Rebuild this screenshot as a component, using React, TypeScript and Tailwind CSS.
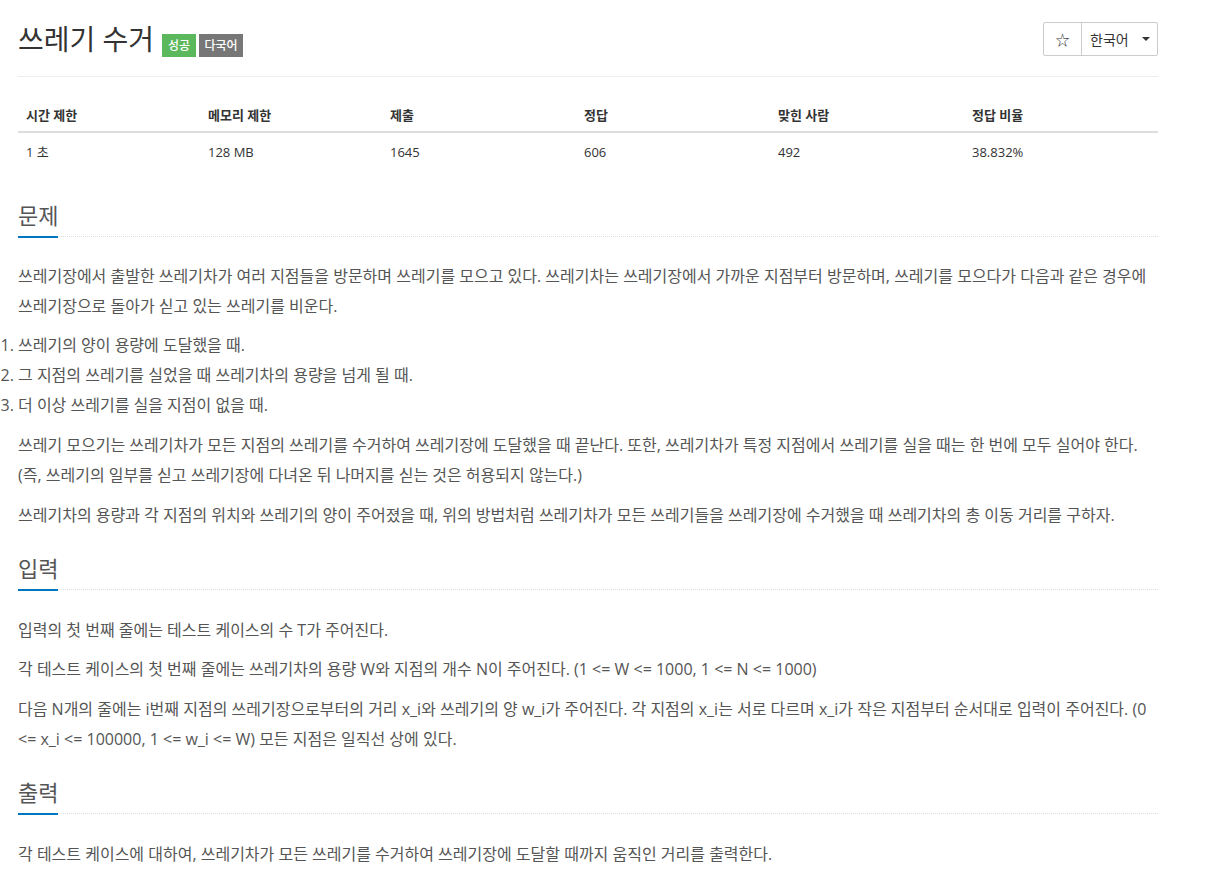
import React from "react";

const FONT = { fontFamily: '"Open Sans", "Noto Sans CJK KR", sans-serif' };

function Headline({ title }: { title: string }) {
  return (
    <div className="border-b border-dotted border-[#dddddd]">
      <h2 className="inline-block text-[22px] leading-[26px] pb-[8px] border-b-2 border-[#0076c0] mb-[-2px] text-[#555]">
        {title}
      </h2>
    </div>
  );
}

export default function App() {
  const cols = [
    { h: "시간 제한", v: "1 초", w: "w-[182px]" },
    { h: "메모리 제한", v: "128 MB", w: "w-[182px]" },
    { h: "제출", v: "1645", w: "w-[194px]" },
    { h: "정답", v: "606", w: "w-[194px]" },
    { h: "맞힌 사람", v: "492", w: "w-[194px]" },
    { h: "정답 비율", v: "38.832%", w: "w-[194px]" },
  ];
  return (
    <div style={FONT} className="bg-white min-h-[884px] text-[#555]">
      <div className="ml-[18px] w-[1140px]">
        {/* header */}
        <div className="flex justify-between items-start pt-[22px] pb-[20px] border-b border-[#eeeeee]">
          <div className="flex items-start h-[34px]">
            <h1 className="text-[28px] leading-[34px] text-[#333]">쓰레기 수거</h1>
            <span className="ml-[8px] mt-[12px] h-[23px] w-[34px] flex items-center justify-center bg-[#5cb85c] text-white text-[12px] font-medium">성공</span>
            <span className="ml-[3px] mt-[12px] h-[23px] w-[44px] flex items-center justify-center bg-[#777777] text-white text-[12px] font-medium">다국어</span>
          </div>
          <div className="flex h-[34px] border border-[#cccccc] rounded-[2px] text-[#333]">
            <div className="w-[38px] flex items-center justify-center border-r border-[#cccccc] text-[14px]">☆</div>
            <div className="w-[75px] flex items-center pl-[8px] text-[14px]">
              <span>한국어</span>
              <span className="ml-[13px] w-0 h-0 border-l-[4px] border-r-[4px] border-t-[4px] border-l-transparent border-r-transparent border-t-[#333]" />
            </div>
          </div>
        </div>

        {/* table */}
        <table className="mt-[20px] w-[1140px] border-collapse text-[13px] text-[#333]">
          <thead>
            <tr className="border-b-2 border-[#dddddd]">
              {cols.map((c) => (
                <th key={c.h} className={`${c.w} text-left font-bold px-[8px] pt-[8px] pb-[6px] leading-[20px]`}>{c.h}</th>
              ))}
            </tr>
          </thead>
          <tbody>
            <tr>
              {cols.map((c) => (
                <td key={c.h} className="px-[8px] pt-[9px] pb-[8px] leading-[20px]">{c.v}</td>
              ))}
            </tr>
          </tbody>
        </table>

        {/* 문제 */}
        <section className="mt-[32px]">
          <Headline title="문제" />
          <div className="mt-[24px] text-[16px] leading-[30px] break-keep">
            <p className="mb-[10px]">
              쓰레기장에서 출발한 쓰레기차가 여러 지점들을 방문하며 쓰레기를 모으고 있다. 쓰레기차는 쓰레기장에서 가까운 지점부터 방문하며, 쓰레기를 모으다가 다음과 같은 경우에 쓰레기장으로 돌아가 싣고 있는 쓰레기를 비운다.
            </p>
            <ol className="list-decimal list-outside pl-0 mb-[10px] mt-[-1px]">
              <li>쓰레기의 양이 용량에 도달했을 때.</li>
              <li>그 지점의 쓰레기를 실었을 때 쓰레기차의 용량을 넘게 될 때.</li>
              <li>더 이상 쓰레기를 실을 지점이 없을 때.</li>
            </ol>
            <p className="mb-[10px]">
              쓰레기 모으기는 쓰레기차가 모든 지점의 쓰레기를 수거하여 쓰레기장에 도달했을 때 끝난다. 또한, 쓰레기차가 특정 지점에서 쓰레기를 실을 때는 한 번에 모두 실어야 한다.
              <br />
              (즉, 쓰레기의 일부를 싣고 쓰레기장에 다녀온 뒤 나머지를 싣는 것은 허용되지 않는다.)
            </p>
            <p className="mb-[10px]">
              쓰레기차의 용량과 각 지점의 위치와 쓰레기의 양이 주어졌을 때, 위의 방법처럼 쓰레기차가 모든 쓰레기들을 쓰레기장에 수거했을 때 쓰레기차의 총 이동 거리를 구하자.
            </p>
          </div>
        </section>

        {/* 입력 */}
        <section className="mt-[25px]">
          <Headline title="입력" />
          <div className="mt-[25px] text-[16px] leading-[30px] break-keep">
            <p className="mb-[9px]">입력의 첫 번째 줄에는 테스트 케이스의 수 T가 주어진다.</p>
            <p className="mb-[10px]">각 테스트 케이스의 첫 번째 줄에는 쓰레기차의 용량 W와 지점의 개수 N이 주어진다. (1 &lt;= W &lt;= 1000, 1 &lt;= N &lt;= 1000)</p>
            <p className="mb-[10px]">
              다음 N개의 줄에는 i번째 지점의 쓰레기장으로부터의 거리 x_i와 쓰레기의 양 w_i가 주어진다. 각 지점의 x_i는 서로 다르며 x_i가 작은 지점부터 순서대로 입력이 주어진다. (0 &lt;= x_i &lt;= 100000, 1 &lt;= w_i &lt;= W) 모든 지점은 일직선 상에 있다.
            </p>
          </div>
        </section>

        {/* 출력 */}
        <section className="mt-[25px]">
          <Headline title="출력" />
          <div className="mt-[25px] text-[16px] leading-[30px] break-keep">
            <p className="mb-[10px]">각 테스트 케이스에 대하여, 쓰레기차가 모든 쓰레기를 수거하여 쓰레기장에 도달할 때까지 움직인 거리를 출력한다.</p>
          </div>
        </section>
      </div>
    </div>
  );
}
